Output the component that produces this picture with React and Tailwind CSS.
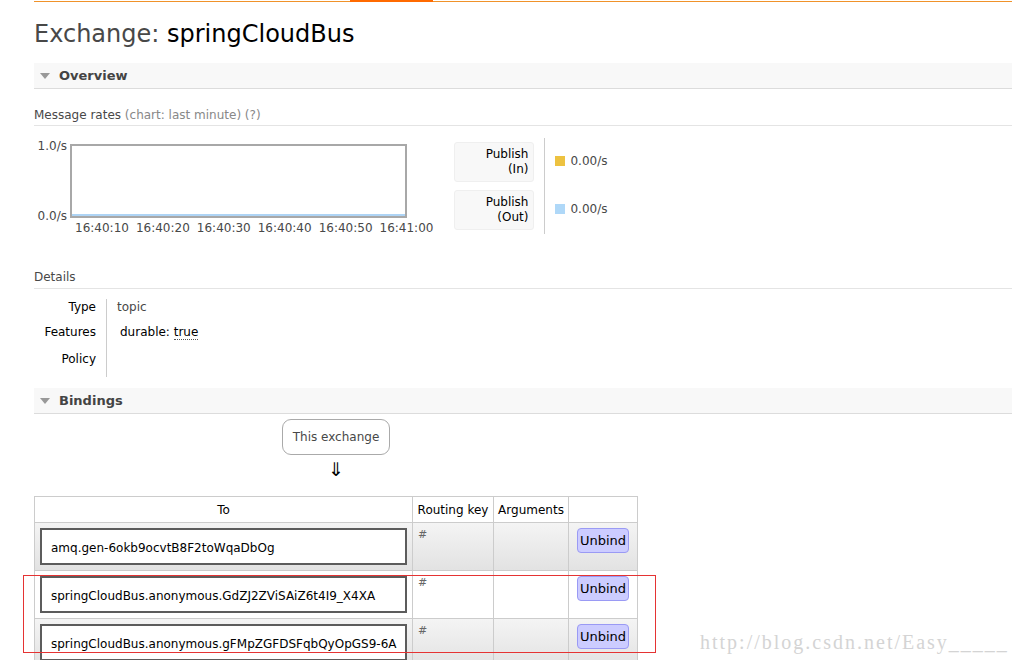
import React from 'react';

const font = { fontFamily: '"DejaVu Sans", Verdana, sans-serif' };

const SectionHeader = ({ title }) => (
  <div className="flex h-[26px] items-center bg-[#f8f8f8] border-b border-[#dcdcdc]">
    <span className="ml-[6px] mr-[9px] h-0 w-0 border-l-[5px] border-r-[5px] border-t-[6px] border-l-transparent border-r-transparent border-t-[#999]" />
    <span className="text-[13px] font-bold text-[#444]">{title}</span>
  </div>
);

const rows = [
  { name: 'amq.gen-6okb9ocvtB8F2toWqaDbOg', shade: true },
  { name: 'springCloudBus.anonymous.GdZJ2ZViSAiZ6t4I9_X4XA', shade: false },
  { name: 'springCloudBus.anonymous.gFMpZGFDSFqbQyOpGS9-6A', shade: true },
];

const times = ['16:40:10', '16:40:20', '16:40:30', '16:40:40', '16:40:50', '16:41:00'];

export default function App() {
  return (
    <div className="relative h-[660px] w-[1012px] overflow-hidden bg-white text-[12px] text-[#484848]" style={font}>
      {/* top nav line */}
      <div className="ml-[34px] h-[2px] border-b border-[#f0922a]">
        <div className="ml-[316px] h-[2px] w-[83px] bg-[#ff6a00]" />
      </div>

      <div className="pl-[34px]">
        <h1 className="mt-[17px] h-[44px] text-[24px] leading-[30px]">
          <span className="text-[#484848]">Exchange: </span>
          <span className="text-black">springCloudBus</span>
        </h1>

        <SectionHeader title="Overview" />

        {/* message rates */}
        <div className="mt-[18px] border-b border-[#e4e4e4] pb-[2px] leading-[16px]">
          Message rates <span className="text-[#888]">(chart: last minute) (?)</span>
        </div>

        <div className="mt-[12px] flex">
          <div className="flex">
            <div className="mr-[3px] flex h-[80px] w-[33px] flex-col justify-between pt-[1px] text-right leading-[14px]">
              <span>1.0/s</span>
              <span className="mb-[-5px]">0.0/s</span>
            </div>
            <div className="flex flex-col">
              <div className="mt-[6px] flex h-[74px] w-[337px] flex-col justify-end border-2 border-[#a8a8a8]">
                <div className="h-[2px] bg-[#aed4f5]" />
              </div>
              <div className="ml-[5px] mt-[3px] flex gap-[7px] leading-[14px]">
                {times.map((t) => (
                  <span key={t}>{t}</span>
                ))}
              </div>
            </div>
          </div>

          <div className="ml-[21px] flex flex-col gap-[8px] pt-[4px]">
            <div className="flex h-[40px] w-[80px] flex-col items-end justify-center rounded-[3px] border border-[#efefef] bg-[#f8f8f8] pr-[5px] leading-[15px] text-black">
              <span>Publish</span>
              <span>(In)</span>
            </div>
            <div className="flex h-[40px] w-[80px] flex-col items-end justify-center rounded-[3px] border border-[#efefef] bg-[#f8f8f8] pr-[5px] leading-[15px] text-black">
              <span>Publish</span>
              <span>(Out)</span>
            </div>
          </div>
          <div className="ml-[10px] h-[96px] w-px bg-[#ccc]" />
          <div className="ml-[10px] flex flex-col pt-[16px]">
            <div className="flex h-[14px] items-center gap-[5px]">
              <span className="h-[10px] w-[10px] bg-[#edc240]" />
              <span>0.00/s</span>
            </div>
            <div className="mt-[34px] flex h-[14px] items-center gap-[5px]">
              <span className="h-[10px] w-[10px] bg-[#afd8f8]" />
              <span>0.00/s</span>
            </div>
          </div>
        </div>

        {/* details */}
        <div className="mt-[34px] border-b border-[#e4e4e4] pb-[3px] leading-[16px]">Details</div>

        <div className="mt-[10px] flex">
          <div className="flex w-[62px] flex-col items-end pt-[1px] leading-[14px] text-black">
            <span>Type</span>
            <span className="mt-[11px]">Features</span>
            <span className="mt-[13px]">Policy</span>
          </div>
          <div className="ml-[10px] h-[78px] w-px bg-[#ccc]" />
          <div className="ml-[10px] flex flex-col pt-[1px] leading-[14px]">
            <span>topic</span>
            <span className="ml-[3px] mt-[11px] text-black">
              durable: <span className="border-b border-dotted border-[#555]">true</span>
            </span>
          </div>
        </div>

        <div className="mt-[11px]">
          <SectionHeader title="Bindings" />
        </div>

        {/* exchange box + arrow */}
        <div className="ml-[248px] mt-[5px] flex w-[108px] flex-col items-center">
          <div className="flex h-[36px] w-[108px] items-center justify-center rounded-[9px] border border-[#aaa]">
            This exchange
          </div>
          <span className="mt-[2px] text-[19px] leading-[24px] text-black">⇓</span>
        </div>

        {/* bindings table */}
        <table className="mt-[15px] border-collapse text-[12px]">
          <thead>
            <tr className="h-[26px]">
              <th className="w-[378px] border border-[#ccc] font-normal text-black">To</th>
              <th className="w-[81px] border border-[#ccc] font-normal text-black">Routing key</th>
              <th className="w-[75px] border border-[#ccc] font-normal text-black">Arguments</th>
              <th className="w-[69px] border border-[#ccc]" />
            </tr>
          </thead>
          <tbody>
            {rows.map((r) => (
              <tr
                key={r.name}
                className={r.shade ? 'h-[48px] bg-gradient-to-b from-[#f4f4f4] to-[#e2e2e2]' : 'h-[48px] bg-white'}
              >
                <td className="border border-[#ccc] px-[5px] py-[5px] align-top">
                  <div className="flex h-[37px] items-center border-2 border-[#5c5c5c] bg-white pl-[9px] pt-[3px] text-black">
                    {r.name}
                  </div>
                </td>
                <td className="border border-[#ccc] px-[5px] pt-[4px] align-top text-[11px] text-[#666]">#</td>
                <td className="border border-[#ccc]" />
                <td className="border border-[#ccc] px-[8px] pt-[5px] align-top">
                  <div className="flex h-[25px] w-[52px] items-center justify-center rounded-[4px] border border-[#9a9af4] bg-[#ccccff] text-[13px] text-black">
                    Unbind
                  </div>
                </td>
              </tr>
            ))}
          </tbody>
        </table>
      </div>

      {/* red annotation rectangle */}
      <div className="absolute left-[23px] top-[575px] h-[78px] w-[633px] border border-[#e53333]" />

      {/* watermark */}
      <div
        className="absolute left-[700px] top-[627px] text-[20px] tracking-[2px] text-[#d4d4d4]"
        style={{ fontFamily: '"Liberation Serif", serif' }}
      >
        http://blog.csdn.net/Easy_____
      </div>
    </div>
  );
}
